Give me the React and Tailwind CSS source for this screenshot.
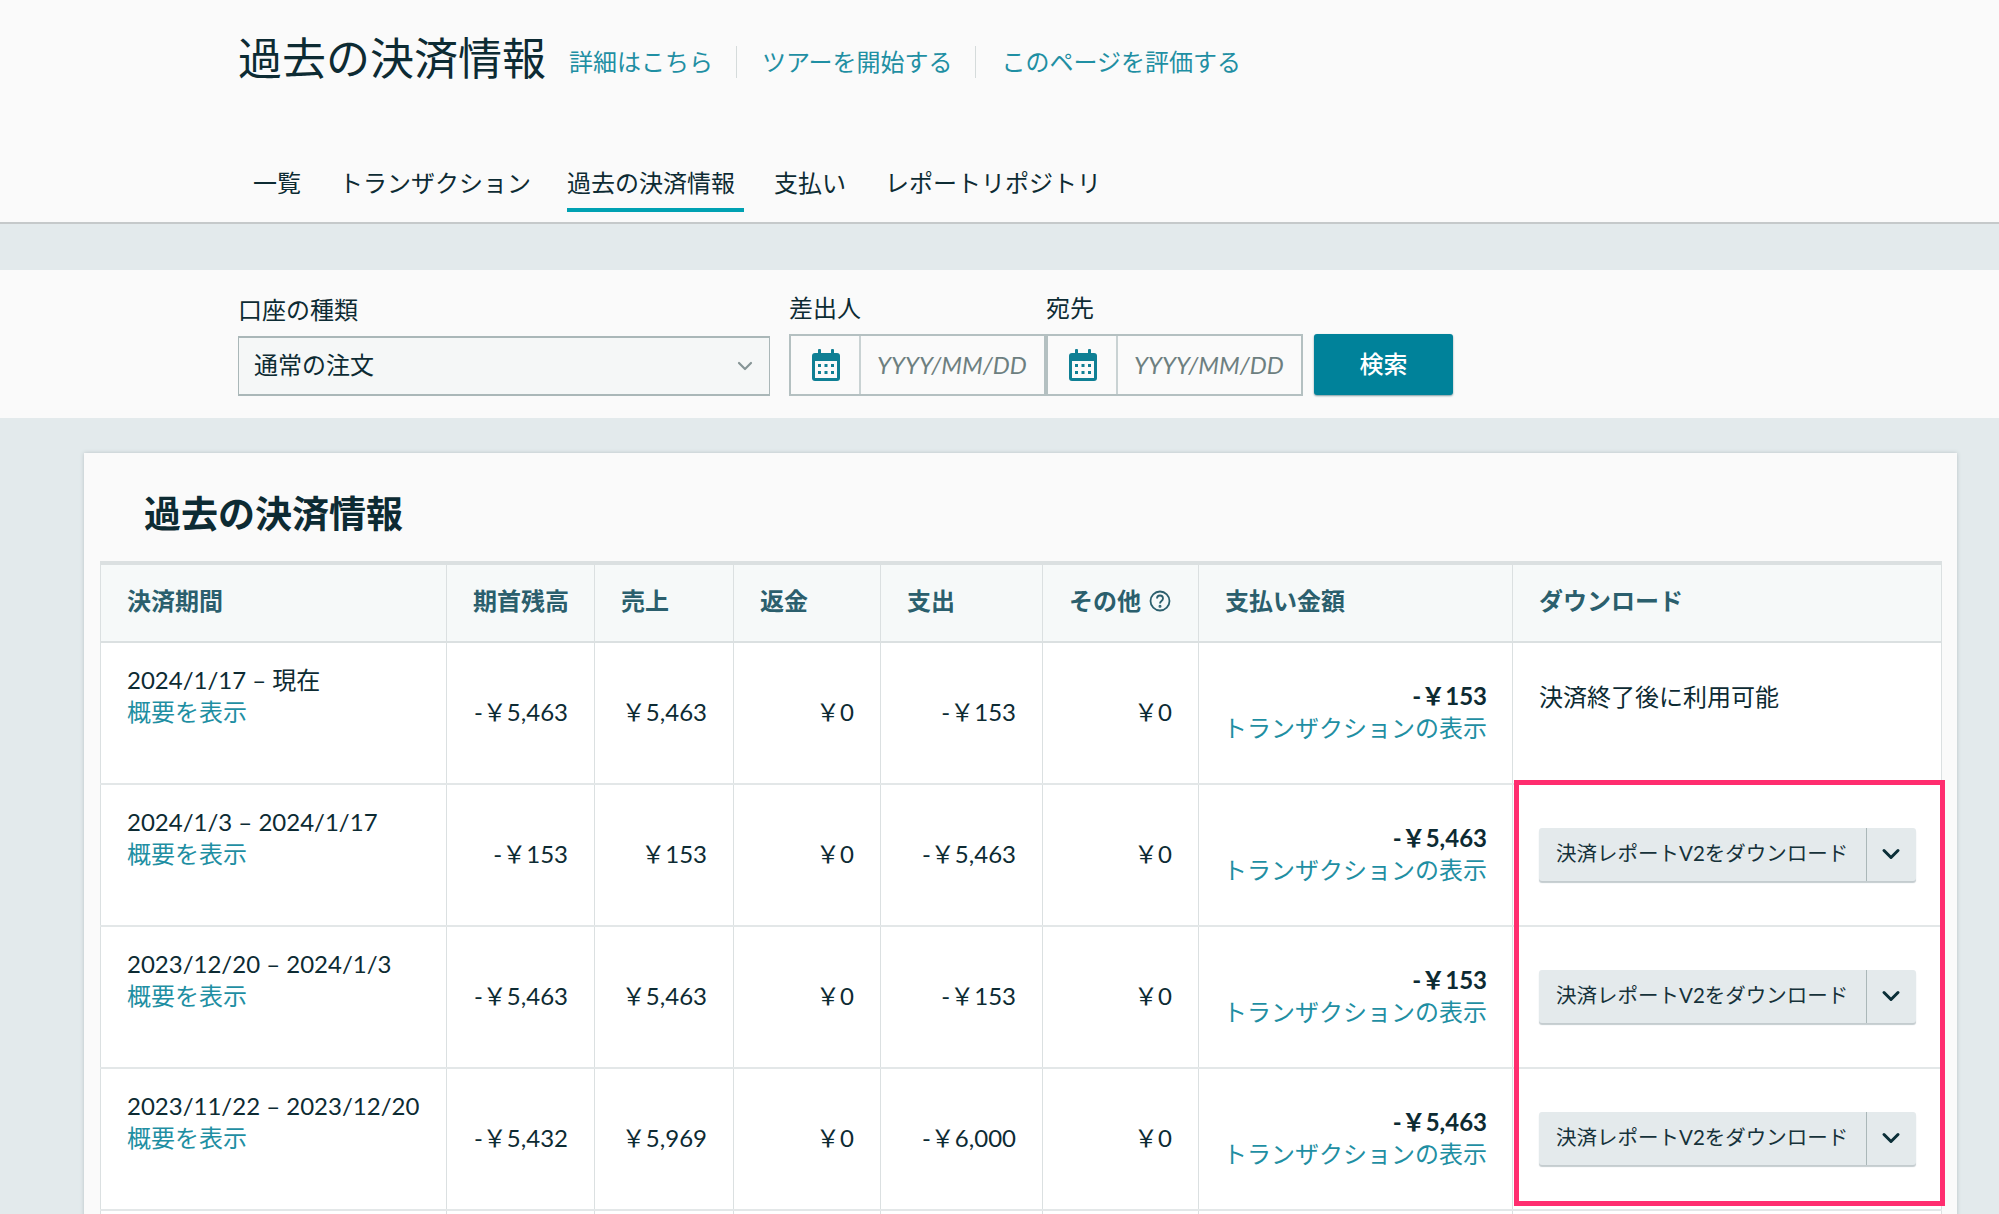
import { ChevronDown } from 'lucide-react';

const rows = [
  { period: '2024/1/17 – 現在', open: '-￥5,463', sales: '￥5,463', refund: '￥0', cost: '-￥153', other: '￥0', pay: '-￥153', ready: false },
  { period: '2024/1/3 – 2024/1/17', open: '-￥153', sales: '￥153', refund: '￥0', cost: '-￥5,463', other: '￥0', pay: '-￥5,463', ready: true },
  { period: '2023/12/20 – 2024/1/3', open: '-￥5,463', sales: '￥5,463', refund: '￥0', cost: '-￥153', other: '￥0', pay: '-￥153', ready: true },
  { period: '2023/11/22 – 2023/12/20', open: '-￥5,432', sales: '￥5,969', refund: '￥0', cost: '-￥6,000', other: '￥0', pay: '-￥5,463', ready: true },
  { period: '', open: '', sales: '', refund: '', cost: '', other: '', pay: '', ready: false },
];

const tabs = [
  { label: '一覧', className: 'mr-[38px] h-[45px]' },
  { label: 'トランザクション', className: 'mr-[36px] h-[45px]' },
  { label: '過去の決済情報', className: 'mr-[30px] h-[45px] border-b-[4px] border-[#00a1b2] pr-[9px]' },
  { label: '支払い', className: 'mr-[39px] h-[45px]' },
  { label: 'レポートリポジトリ', className: 'h-[45px]' },
];

const CalendarIcon = () => (
  <svg width="28" height="32" viewBox="0 0 28 32" fill="none">
    <rect x="0" y="4" width="28" height="28" rx="3" fill="#0f7f94" />
    <rect x="6" y="0" width="3" height="7" rx="1" fill="#0f7f94" />
    <rect x="19" y="0" width="3" height="7" rx="1" fill="#0f7f94" />
    <rect x="3" y="12" width="22" height="17" fill="#fafafa" />
    <g fill="#0f7f94">
      <rect x="6" y="15" width="3" height="3" />
      <rect x="12.5" y="15" width="3" height="3" />
      <rect x="19" y="15" width="3" height="3" />
      <rect x="6" y="22" width="3" height="3" />
      <rect x="12.5" y="22" width="3" height="3" />
      <rect x="19" y="22" width="3" height="3" />
    </g>
  </svg>
);

const DateInput = () => (
  <div className="flex h-[62px] border-2 border-[#b4c0c1]">
    <div className="flex w-[70px] items-center justify-center border-r-2 border-[#c9d2d3] pl-[1px]">
      <CalendarIcon />
    </div>
    <div className="flex flex-1 items-center pl-[16px] text-[24px] italic text-[#6d7f80]">YYYY/MM/DD</div>
  </div>
);

const DownloadButton = () => (
  <div className="flex h-[53px] w-[377px] items-center rounded-[3px] bg-[#e4eaec] shadow-[0_2px_1px_#c4cccf]">
    <div className="flex h-full w-[328px] items-center border-r border-[#aab7b8] pb-[2px] pl-[17px] text-[20.5px] text-[#16323a]">
      決済レポートV2をダウンロード
    </div>
    <div className="flex flex-1 justify-center pr-[2px]">
      <ChevronDown size={28} strokeWidth={2.6} className="text-[#0b2f38]" />
    </div>
  </div>
);

const App = () => {
  const th = 'whitespace-nowrap border-x border-[#dbe0e1] px-[26px] pb-[5px] text-left font-bold text-[#2b5f6d]';
  const td = 'border-x border-[#dbe0e1] px-[26px] pb-[2px] text-right align-middle';

  return (
    <div className="relative h-[1214px] overflow-hidden bg-[#e3eaec] font-['Lato','Noto_Sans_CJK_JP',sans-serif] text-[24px] leading-[32px] text-[#0d2b33]">
      <div className="h-[224px] border-b-2 border-[#c5c9ca] bg-[#fafafa] pl-[238px]">
        <div className="flex items-start pt-[30px]">
          <h1 className="text-[44px] leading-[56px] font-normal">過去の決済情報</h1>
          <div className="mt-[16px] flex items-center">
            <a className="ml-[23px] text-[#1f8fa3]">詳細はこちら</a>
            <div className="ml-[23px] h-[32px] w-px bg-[#d5dbdb]" />
            <a className="ml-[25px] text-[#1f8fa3]">ツアーを開始する</a>
            <div className="ml-[22px] h-[32px] w-px bg-[#d5dbdb]" />
            <a className="ml-[26px] text-[#1f8fa3]">このページを評価する</a>
          </div>
        </div>
        <div className="mt-[81px] flex pl-[15px]">
          {tabs.map((tab) => (
            <div key={tab.label} className={tab.className}>
              {tab.label}
            </div>
          ))}
        </div>
      </div>

      <div className="mt-[46px] flex h-[148px] bg-[#fafafa] pl-[238px] pt-[22px]">
        <div className="mt-[2px] w-[532px]">
          <div className="mb-[10px]">口座の種類</div>
          <div className="flex h-[60px] items-center justify-between border border-y-2 border-[#aab7b8] bg-[#f5f7f7] pl-[15px] pr-[12px]">
            <span className="pb-[2px]">通常の注文</span>
            <ChevronDown size={24} strokeWidth={2.2} className="text-[#879596]" />
          </div>
        </div>
        <div className="ml-[19px] w-[257px]">
          <div className="mb-[10px]">差出人</div>
          <DateInput />
        </div>
        <div className="w-[257px]">
          <div className="mb-[10px]">宛先</div>
          <DateInput />
        </div>
        <div className="ml-[11px] mt-[42px] flex h-[61px] w-[139px] items-center justify-center rounded-[3px] bg-[#00829a] pb-[2px] font-medium text-white shadow-[0_1px_2px_#7d9aa1]">
          検索
        </div>
      </div>

      <div className="mx-[84px] mt-[35px] w-[1873px] bg-[#fafafa] shadow-[0_0_4px_#b8c2c5]">
        <h2 className="pb-[25px] pl-[60px] pt-[39px] text-[37px] leading-[44px] font-bold">過去の決済情報</h2>
        <div className="pl-[16px] pr-[16px]">
          <table className="w-[1841px] table-fixed border-collapse border-t-[4px] border-[#dbe0e1] bg-white">
            <colgroup>
              <col className="w-[346px]" />
              <col className="w-[148px]" />
              <col className="w-[139px]" />
              <col className="w-[147px]" />
              <col className="w-[162px]" />
              <col className="w-[156px]" />
              <col className="w-[314px]" />
              <col className="w-[429px]" />
            </colgroup>
            <thead>
              <tr className="h-[79px] border-b-2 border-[#dbe0e1] bg-[#f6f9f9]">
                <th className={th}>決済期間</th>
                <th className={th}>期首残高</th>
                <th className={th}>売上</th>
                <th className={th}>返金</th>
                <th className={th}>支出</th>
                <th className={th}>
                  <span className="inline-flex items-center gap-2">
                    その他
                    <svg width="22" height="22" viewBox="0 0 22 22" fill="none" stroke="#2b5f6d" strokeWidth="1.8">
                      <circle cx="11" cy="11" r="9.500" />
                      <path d="M8 8.500c0-4 6-4 6 0 0 2.500-3 2.500-3 5" />
                      <circle cx="11" cy="16.300" r="0.6" />
                    </svg>
                  </span>
                </th>
                <th className={th}>支払い金額</th>
                <th className={th}>ダウンロード</th>
              </tr>
            </thead>
            <tbody>
              {rows.map((row, i) => (
                <tr key={i} className="h-[142px] border-b-2 border-[#e3e7e8]">
                  <td className="border-x border-[#dbe0e1] px-[26px] pt-[21px] text-left align-top">
                    {row.period}
                    {row.period && <div className="text-[#1f8fa3]">概要を表示</div>}
                  </td>
                  <td className={td}>{row.open}</td>
                  <td className={td}>{row.sales}</td>
                  <td className={td}>{row.refund}</td>
                  <td className={td}>{row.cost}</td>
                  <td className={td}>{row.other}</td>
                  <td className="whitespace-nowrap border-x border-[#dbe0e1] pb-[2px] pl-[20px] pr-[25px] text-right align-middle">
                    {row.pay && <div className="font-bold">{row.pay}</div>}
                    {row.pay && <div className="text-[#1f8fa3]">トランザクションの表示</div>}
                  </td>
                  <td className="border-x border-[#dbe0e1] px-[26px] pb-[2px] align-middle">
                    {row.ready ? <DownloadButton /> : row.period && <div className="mb-[30px]">決済終了後に利用可能</div>}
                  </td>
                </tr>
              ))}
            </tbody>
          </table>
        </div>
      </div>

      {/* annotation box around the download buttons */}
      <div className="absolute left-[1514px] top-[780px] h-[426px] w-[431px] border-[5px] border-[#ff2d6f]" />
    </div>
  );
};

export default App;
